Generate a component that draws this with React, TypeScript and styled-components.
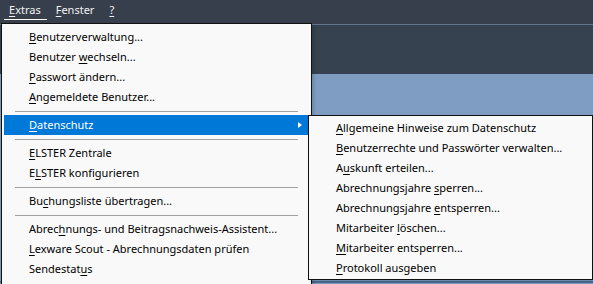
import { Fragment } from 'react'
import styled, { createGlobalStyle } from 'styled-components'

type Entry = string | null

const mainItems: Entry[] = [
	'&Benutzerverwaltung...',
	'Benutzer &wechseln...',
	'&Passwort ändern...',
	'&Angemeldete Benutzer...',
	null,
	'&Datenschutz',
	null,
	'&ELSTER Zentrale',
	'E&LSTER konfigurieren',
	null,
	'Bu&chungsliste übertragen...',
	null,
	'Abrec&hnungs- und Beitragsnachweis-Assistent...',
	'&Lexware Scout - Abrechnungsdaten prüfen',
	'Sendestat&us',
]

const privacyItems = [
	'&Allgemeine Hinweise zum Datenschutz',
	'&Benutzerrechte und Passwörter verwalten...',
	'A&uskunft erteilen...',
	'Abrechnungsjahre &sperren...',
	'Abrechnungsjahre &entsperren...',
	'Mitarbeiter &löschen...',
	'&Mitarbeiter entsperren...',
	'&Protokoll ausgeben',
]

// '&' marks the mnemonic letter, like a Windows resource string
function Label({ text }: { text: string }) {
	const i = text.indexOf('&')
	if (i < 0) return <>{text}</>
	return (
		<>
			{text.slice(0, i)}
			<Key>{text[i + 1]}</Key>
			{text.slice(i + 2)}
		</>
	)
}

function App() {
	return (
		<>
			<GlobalStyle />
			<Screen>
				<MenuBar>
					<TopItem $open>
						<Label text="&Extras" />
					</TopItem>
					<TopItem>
						<Label text="&Fenster" />
					</TopItem>
					<TopItem>
						<Label text="&?" />
					</TopItem>
				</MenuBar>
				<Toolbar />
				<Workspace />

				<MainMenu>
					{mainItems.map((entry, idx) =>
						entry === null ? (
							<Separator key={idx} />
						) : (
							<Fragment key={idx}>
								<Item $active={entry === '&Datenschutz'}>
									<Label text={entry} />
									{entry === '&Datenschutz' && <Arrow />}
								</Item>
							</Fragment>
						)
					)}
				</MainMenu>

				<SubMenu>
					{privacyItems.map((entry) => (
						<Item key={entry}>
							<Label text={entry} />
						</Item>
					))}
				</SubMenu>
			</Screen>
		</>
	)
}

const GlobalStyle = createGlobalStyle`
	html, body {
		margin: 0;
		padding: 0;
		overflow: hidden;
		background: #7f9cc3;
	}
	body {
		font-family: "Noto Sans", "Open Sans", sans-serif;
		font-size: 11px;
	}
`
const Screen = styled.div`
	position: relative;
	width: 593px;
	height: 284px;
	display: flex;
	flex-direction: column;
	background: #7f9cc3;
	overflow: hidden;
`
const MenuBar = styled.div`
	height: 24px;
	display: flex;
	align-items: flex-start;
	padding-left: 4px;
	background: #363f4b;
	border-bottom: 1px solid #60748c;
`
const TopItem = styled.div<{ $open?: boolean }>`
	height: 19px;
	line-height: 19px;
	padding: 0 6px 0 5px;
	margin-right: 4px;
	color: #f2f2f2;
	border-bottom: 1px solid ${(p) => (p.$open ? '#ffffff' : 'transparent')};
`
const Toolbar = styled.div`
	height: 49px;
	background: #364250;
`
const Workspace = styled.div`
	flex: 1;
	background: #7f9cc3;
	border-bottom: 2px solid #4d6d96;
	margin-bottom: 1px;
`
const Key = styled.span`
	text-decoration: underline;
	text-underline-offset: 2px;
`
const Menu = styled.div`
	position: absolute;
	box-sizing: border-box;
	background: #f9f9f9;
	border: 1px solid #111;
	display: flex;
	flex-direction: column;
	color: #000;
	box-shadow: 2px 2px 3px rgba(0, 0, 0, 0.15);
`
const MainMenu = styled(Menu)`
	left: 1px;
	top: 23px;
	width: 311px;
	padding: 3px 0 8px;
`
const SubMenu = styled(Menu)`
	left: 308px;
	top: 115px;
	width: 285px;
	padding: 2px 0 1px;
`
const Item = styled.div<{ $active?: boolean }>`
	position: relative;
	height: 20px;
	line-height: 20px;
	margin: 0 3px 0 2px;
	padding-left: 25px;
	white-space: nowrap;
	background: ${(p) => (p.$active ? '#0078d7' : 'transparent')};
	color: ${(p) => (p.$active ? '#fff' : '#000')};
`
const Arrow = styled.span`
	position: absolute;
	right: 6px;
	top: 7px;
	width: 0;
	height: 0;
	border-top: 3px solid transparent;
	border-bottom: 3px solid transparent;
	border-left: 4px solid #fff;
`
const Separator = styled.div`
	height: 8px;
	margin: 0 13px;
	display: flex;
	align-items: center;
	&::after {
		content: '';
		flex: 1;
		height: 1px;
		background: #a0a0a0;
	}
`

export default App
